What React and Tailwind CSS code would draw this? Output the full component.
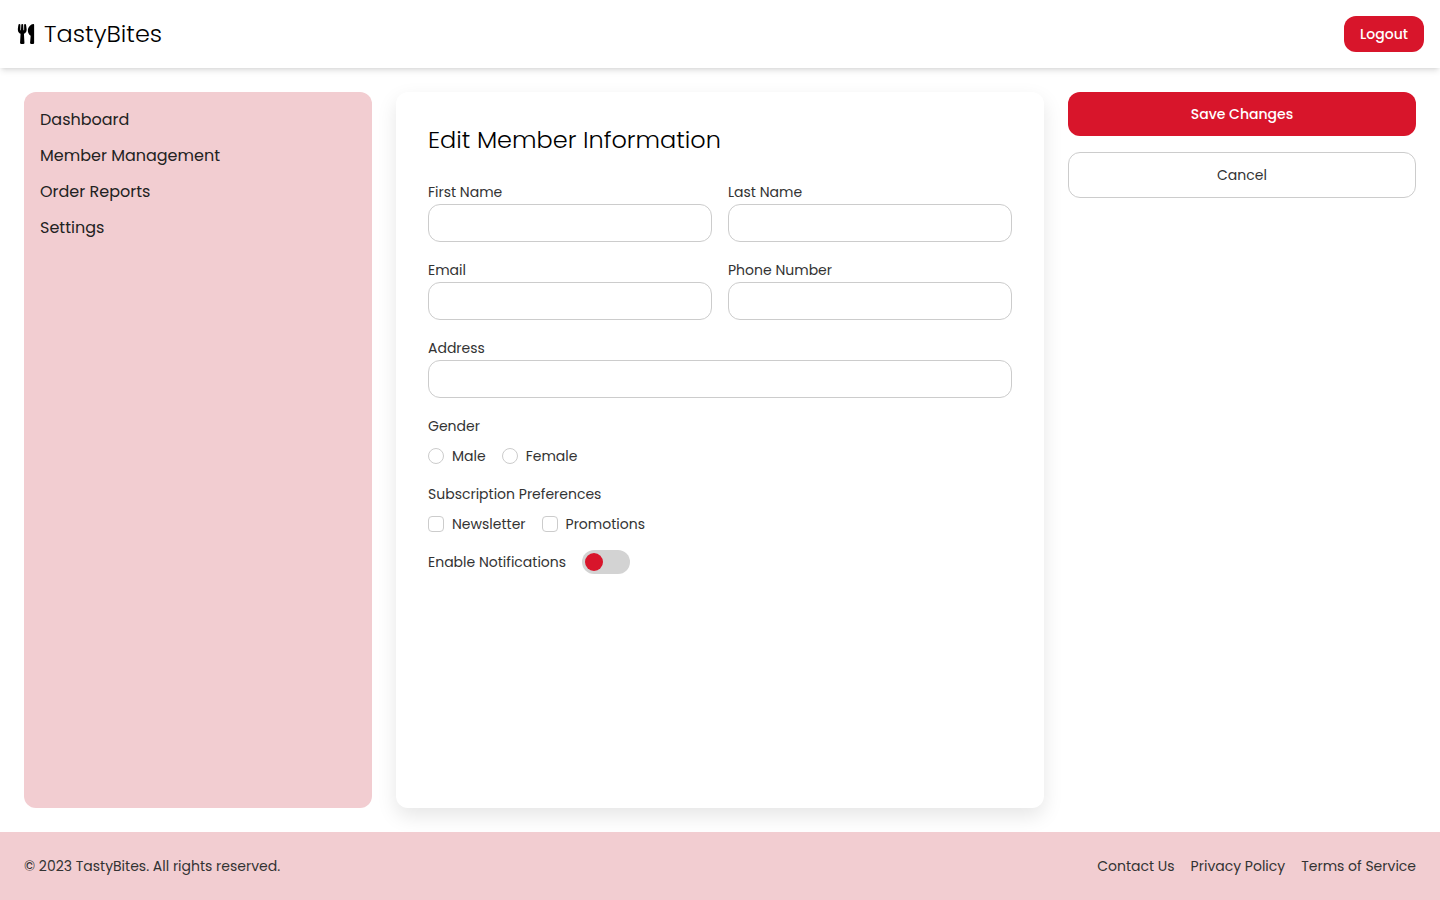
import { FaUtensils } from "react-icons/fa";

const navItems = ["Dashboard", "Member Management", "Order Reports", "Settings"];
const footerLinks = ["Contact Us", "Privacy Policy", "Terms of Service"];

function TextField({ id, label, type = "text", wide = false }) {
  return (
    <div className={wide ? "col-span-2" : ""}>
      <label htmlFor={id} className="block leading-6">
        {label}
      </label>
      <input
        id={id}
        name={id}
        type={type}
        className="block h-[38px] w-full rounded-xl border border-[#cccccc] bg-white px-3 focus:border-[#d8152b] focus:outline-none"
      />
    </div>
  );
}

function Choice({ type, name, label }) {
  const shape =
    type === "radio" ? "rounded-full" : "rounded";
  return (
    <label className="flex items-center gap-2">
      <input
        type={type}
        name={name}
        value={label}
        className={`size-4 shrink-0 appearance-none border border-[#cccccc] bg-white checked:border-[#d8152b] checked:bg-[#d8152b] ${shape}`}
      />
      {label}
    </label>
  );
}

function ChoiceGroup({ legend, type, name, options }) {
  return (
    <fieldset>
      <legend className="leading-6">{legend}</legend>
      <div className="mt-2 flex flex-wrap gap-4">
        {options.map((option) => (
          <Choice key={option} type={type} name={name} label={option} />
        ))}
      </div>
    </fieldset>
  );
}

export default function App() {
  return (
    <div className="flex min-h-screen flex-col bg-white font-[Poppins,Inter,sans-serif] text-sm text-[#333333]">
      <header className="flex items-center justify-between bg-white p-4 shadow-md">
        <div className="flex items-center gap-2 text-black">
          <FaUtensils className="size-5" aria-hidden="true" />
          <span className="text-2xl font-light">TastyBites</span>
        </div>
        <button
          type="button"
          className="min-w-20 rounded-xl bg-[#d8152b] px-4 py-2 font-medium text-white"
        >
          Logout
        </button>
      </header>

      <main className="flex grow gap-6 p-6">
        <nav className="w-1/4 shrink-0 rounded-xl bg-[#f2cdd1] p-4">
          <ul className="flex flex-col gap-3 text-base text-[#222222]">
            {navItems.map((item) => (
              <li key={item}>
                <a href="#" className="block">
                  {item}
                </a>
              </li>
            ))}
          </ul>
        </nav>

        <section className="min-w-0 flex-1 rounded-xl bg-white p-8 shadow-[0_8px_20px_rgba(0,0,0,0.1)]">
          <h1 className="mb-6 text-2xl font-light text-black">Edit Member Information</h1>
          <form id="member-form" className="flex flex-col gap-4">
            <div className="grid grid-cols-2 gap-4">
              <TextField id="firstName" label="First Name" />
              <TextField id="lastName" label="Last Name" />
              <TextField id="email" label="Email" type="email" />
              <TextField id="phone" label="Phone Number" type="tel" />
              <TextField id="address" label="Address" wide />
            </div>
            <ChoiceGroup
              legend="Gender"
              type="radio"
              name="gender"
              options={["Male", "Female"]}
            />
            <ChoiceGroup
              legend="Subscription Preferences"
              type="checkbox"
              name="subscriptions"
              options={["Newsletter", "Promotions"]}
            />
            <div className="flex items-center gap-4">
              <label htmlFor="notifications">Enable Notifications</label>
              <input
                id="notifications"
                type="checkbox"
                role="switch"
                className="flex h-6 w-12 appearance-none items-center rounded-full bg-[#d3d3d3] px-[3px] before:size-[18px] before:rounded-full before:bg-[#d8152b] checked:justify-end"
              />
            </div>
          </form>
        </section>

        <aside className="flex w-1/4 shrink-0 flex-col gap-4">
          <button
            type="submit"
            form="member-form"
            className="rounded-xl bg-[#d8152b] p-3 font-medium text-white"
          >
            Save Changes
          </button>
          <button type="button" className="rounded-xl border border-[#cccccc] bg-white p-3">
            Cancel
          </button>
        </aside>
      </main>

      <footer className="relative flex items-center justify-between bg-[#f2cdd1] p-6">
        <p>© 2023 TastyBites. All rights reserved.</p>
        <div className="flex gap-4">
          {footerLinks.map((link) => (
            <a key={link} href="#">
              {link}
            </a>
          ))}
        </div>
      </footer>
    </div>
  );
}
